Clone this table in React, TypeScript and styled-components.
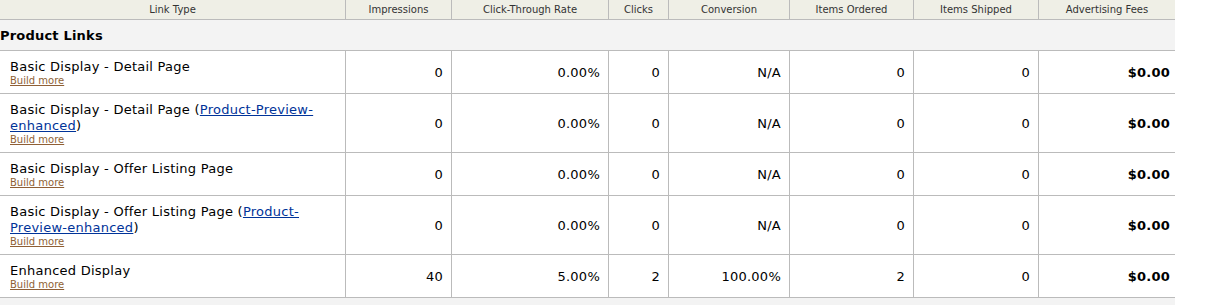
import { createGlobalStyle, styled } from "styled-components"

type rowData = {
    title: string
    link?: [string, string]
    impressions: string
    ctr: string
    clicks: string
    conversion: string
    ordered: string
    shipped: string
    fees: string
}

const headers = [
    "Link Type",
    "Impressions",
    "Click-Through Rate",
    "Clicks",
    "Conversion",
    "Items Ordered",
    "Items Shipped",
    "Advertising Fees",
]

const rows: rowData[] = [
    { title: "Basic Display - Detail Page", impressions: "0", ctr: "0.00%", clicks: "0", conversion: "N/A", ordered: "0", shipped: "0", fees: "$0.00" },
    { title: "Basic Display - Detail Page", link: ["Product-Preview-", "enhanced"], impressions: "0", ctr: "0.00%", clicks: "0", conversion: "N/A", ordered: "0", shipped: "0", fees: "$0.00" },
    { title: "Basic Display - Offer Listing Page", impressions: "0", ctr: "0.00%", clicks: "0", conversion: "N/A", ordered: "0", shipped: "0", fees: "$0.00" },
    { title: "Basic Display - Offer Listing Page", link: ["Product-", "Preview-enhanced"], impressions: "0", ctr: "0.00%", clicks: "0", conversion: "N/A", ordered: "0", shipped: "0", fees: "$0.00" },
    { title: "Enhanced Display", impressions: "40", ctr: "5.00%", clicks: "2", conversion: "100.00%", ordered: "2", shipped: "0", fees: "$0.00" },
]

const App = () => {
    return (
        <>
            <GlobalStyle />
            <ReportTable>
                {headers.map((h, i) => (
                    <HeadCell key={h} $first={i === 0}>{h}</HeadCell>
                ))}
                <SectionRow>Product Links</SectionRow>
                {rows.map((r, i) => (
                    <Row key={i}>
                        <TypeCell>
                            <Title>
                                {r.title}
                                {r.link && (
                                    <>
                                        {" ("}
                                        <PreviewLink href="#">{r.link[0]}<wbr />{r.link[1]}</PreviewLink>
                                        {")"}
                                    </>
                                )}
                            </Title>
                            <BuildMore href="#">Build more</BuildMore>
                        </TypeCell>
                        <NumCell>{r.impressions}</NumCell>
                        <NumCell>{r.ctr}</NumCell>
                        <NumCell>{r.clicks}</NumCell>
                        <NumCell>{r.conversion}</NumCell>
                        <NumCell>{r.ordered}</NumCell>
                        <NumCell>{r.shipped}</NumCell>
                        <NumCell $fee>{r.fees}</NumCell>
                    </Row>
                ))}
                <FooterRow />
            </ReportTable>
        </>
    )
}

const GlobalStyle = createGlobalStyle`
    body {
        margin: 0;
        background: #fff;
        font-family: Verdana, "DejaVu Sans", sans-serif;
        color: #000;
    }
`

const ReportTable = styled.div`
    display: grid;
    grid-template-columns: 345px 106px 157px 60px 121px 124px 125px 137px;
    width: 1175px;
`

const HeadCell = styled.div<{ $first?: boolean }>`
    box-sizing: border-box;
    height: 20px;
    background: #efefe6;
    border-bottom: 1px solid #bbb;
    border-left: ${p => p.$first ? "none" : "1px solid #bbb"};
    font-size: 10px;
    color: #333;
    display: flex;
    align-items: center;
    justify-content: center;
    padding-bottom: 1px;
`

const SectionRow = styled.div`
    grid-column: 1 / -1;
    box-sizing: border-box;
    height: 31px;
    background: #f3f3f3;
    border-bottom: 1px solid #bbb;
    font-size: 13px;
    font-weight: bold;
    letter-spacing: 0.2px;
    display: flex;
    align-items: center;
    padding-left: 0;
`

const Row = styled.div`
    display: contents;
`

const TypeCell = styled.div`
    box-sizing: border-box;
    border-bottom: 1px solid #bbb;
    padding: 8px 8px 6px 10px;
    display: flex;
    flex-direction: column;
`

const Title = styled.div`
    font-size: 13px;
    line-height: 16px;
    letter-spacing: 0.25px;
`

const PreviewLink = styled.a`
    color: #003399;
    text-decoration: underline;
`

const BuildMore = styled.a`
    font-size: 10px;
    line-height: 12px;
    color: #8f5f35;
    text-decoration: underline;
    align-self: flex-start;
`

const NumCell = styled.div<{ $fee?: boolean }>`
    box-sizing: border-box;
    border-bottom: 1px solid #bbb;
    border-left: 1px solid #bbb;
    font-size: 13px;
    letter-spacing: 0.25px;
    font-weight: ${p => p.$fee ? "bold" : "normal"};
    display: flex;
    align-items: center;
    justify-content: flex-end;
    padding-right: ${p => p.$fee ? "5px" : "8px"};
`

const FooterRow = styled.div`
    grid-column: 1 / -1;
    height: 8px;
    background: #f3f3f3;
`

export default App
